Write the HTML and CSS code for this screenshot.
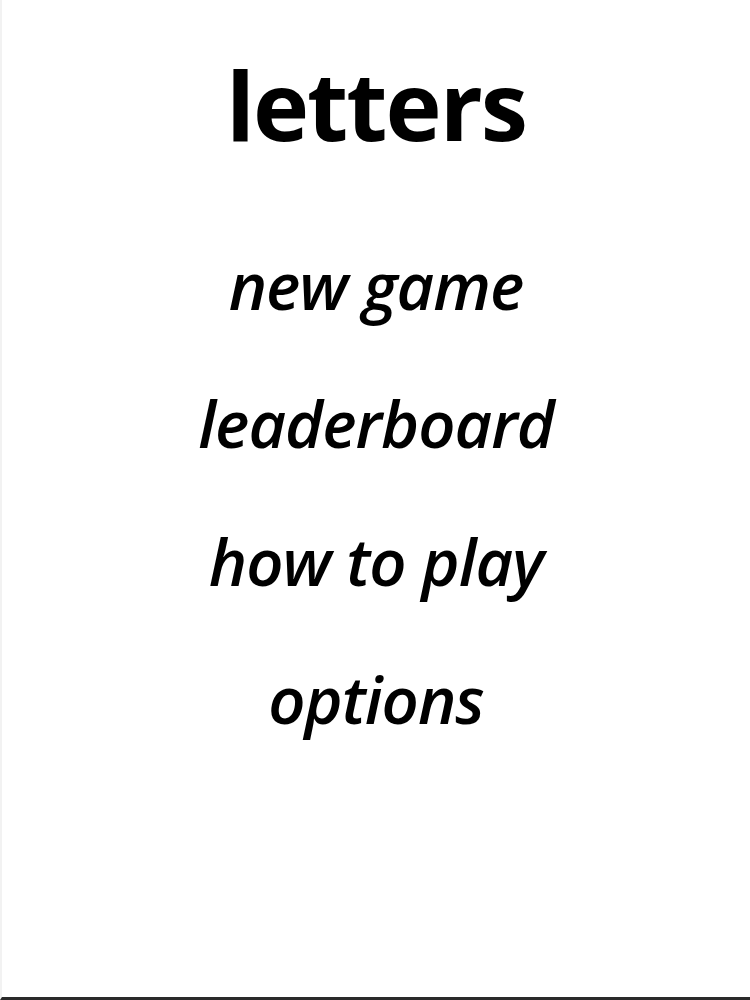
FILE: index.html
```html
<!DOCTYPE html>
<html>
<head>
<meta charset="utf-8">
<link rel="stylesheet" href="styles.css">
</head>
<body>
<div class="screen">
  <h1 class="title">letters</h1>
  <nav class="menu">
    <div class="item">new game</div>
    <div class="item">leaderboard</div>
    <div class="item">how to play</div>
    <div class="item">options</div>
  </nav>
</div>
</body>
</html>
```
FILE: styles.css
```css
html, body {
  margin: 0;
  padding: 0;
  background: #ffffff;
}
.screen {
  width: 748px;
  height: 997px;
  border-bottom: 3px solid #2a2a2a;
  border-left: 2px solid #f2f2f2;
  font-family: "Open Sans", "Noto Sans", sans-serif;
  color: #000;
  display: flex;
  flex-direction: column;
  align-items: center;
}
.title {
  margin: 44px 0 0 0;
  font-size: 95px;
  font-weight: 700;
  line-height: 120px;
  letter-spacing: -2px;
}
.menu {
  margin-top: 52px;
  display: flex;
  flex-direction: column;
  align-items: center;
}
.item {
  font-size: 65px;
  font-style: italic;
  font-weight: 600;
  line-height: 138px;
  letter-spacing: -1px;
}
```
